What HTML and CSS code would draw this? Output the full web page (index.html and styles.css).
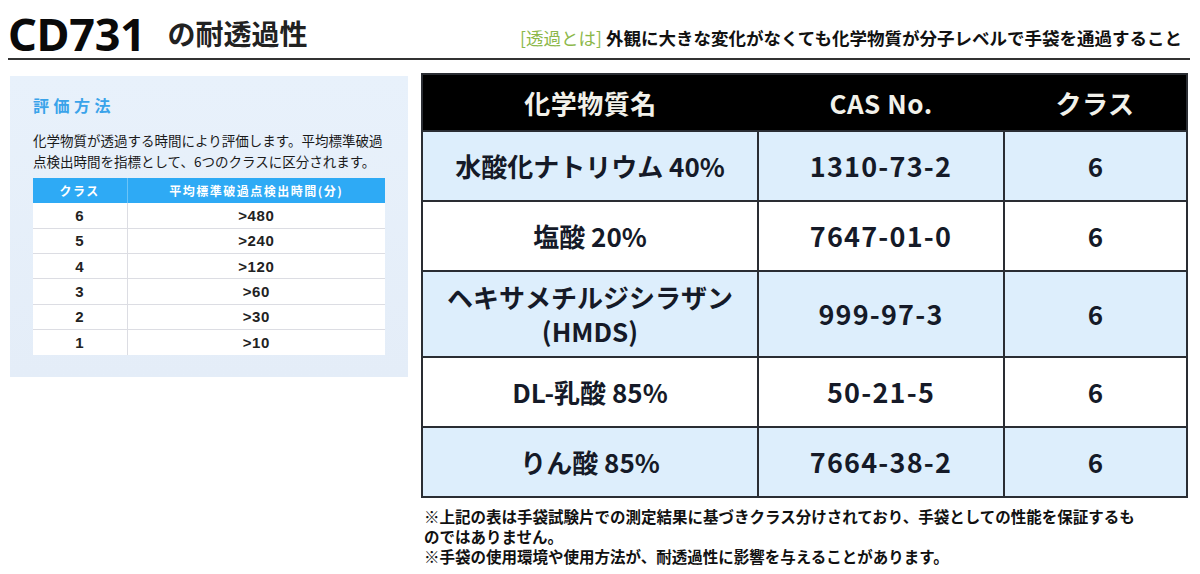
FILE: index.html
```html
<!DOCTYPE html>
<html lang="ja">
<head>
<meta charset="utf-8">
<title>CD731 の耐透過性</title>
<link rel="stylesheet" href="styles.css">
</head>
<body>
<div class="page">
  <header class="head">
    <h1 class="model">CD731</h1>
    <h2 class="subtitle">の耐透過性</h2>
    <p class="note"><span class="note-tag">[透過とは]</span> 外観に大きな変化がなくても化学物質が分子レベルで手袋を通過すること</p>
  </header>
  <main class="content">
    <section class="panel">
      <h3 class="panel-title">評価方法</h3>
      <p class="panel-text">化学物質が透過する時間により評価します。平均標準破過点検出時間を指標として、6つのクラスに区分されます。</p>
      <table class="mini">
        <thead>
          <tr><th class="mini-c1">クラス</th><th>平均標準破過点検出時間(分)</th></tr>
        </thead>
        <tbody>
          <tr><td>6</td><td>&gt;480</td></tr>
          <tr><td>5</td><td>&gt;240</td></tr>
          <tr><td>4</td><td>&gt;120</td></tr>
          <tr><td>3</td><td>&gt;60</td></tr>
          <tr><td>2</td><td>&gt;30</td></tr>
          <tr><td>1</td><td>&gt;10</td></tr>
        </tbody>
      </table>
    </section>
    <section class="right">
      <table class="main">
        <thead>
          <tr><th class="c1">化学物質名</th><th class="c2">CAS No.</th><th class="c3">クラス</th></tr>
        </thead>
        <tbody>
          <tr class="blue"><td>水酸化ナトリウム 40%</td><td class="cas">1310-73-2</td><td>6</td></tr>
          <tr><td>塩酸 20%</td><td class="cas">7647-01-0</td><td>6</td></tr>
          <tr class="blue tall"><td>ヘキサメチルジシラザン<br>(HMDS)</td><td class="cas">999-97-3</td><td>6</td></tr>
          <tr><td>DL-乳酸 85%</td><td class="cas">50-21-5</td><td>6</td></tr>
          <tr class="blue"><td>りん酸 85%</td><td class="cas">7664-38-2</td><td>6</td></tr>
        </tbody>
      </table>
      <div class="foot">
        <p>※上記の表は手袋試験片での測定結果に基づきクラス分けされており、手袋としての性能を保証するものではありません。</p>
        <p>※手袋の使用環境や使用方法が、耐透過性に影響を与えることがあります。</p>
      </div>
    </section>
  </main>
</div>
</body>
</html>
```
FILE: styles.css
```css
* { box-sizing: border-box; }
html, body { margin: 0; padding: 0; background: #fff; }
body { font-family: "Noto Sans CJK JP", "Noto Sans", sans-serif; color: #111; }
.page { width: 1200px; padding: 0 10px 0 8px; }

.head {
  display: flex;
  align-items: center;
  height: 60px;
  padding-top: 8px;
  border-bottom: 2px solid #333;
}
.model {
  margin: 0;
  font-family: "Noto Sans", sans-serif;
  font-weight: 700;
  font-size: 45px;
  line-height: 1;
  color: #0a0a0a;
  letter-spacing: -0.3px;
}
.subtitle {
  margin: 0 0 0 22px;
  font-size: 28px;
  font-weight: 700;
  line-height: 1;
  color: #222;
}
.note {
  margin: 10px 0 0 auto;
  padding-right: 8px;
  font-size: 17.5px;
  font-weight: 700;
  color: #111;
  line-height: 1;
}
.note-tag { color: #8cb84a; font-weight: 400; }

.content {
  display: flex;
  align-items: flex-start;
  gap: 13px;
  padding-top: 13px;
}

.panel {
  width: 398px;
  margin-left: 2px;
  margin-top: 3px;
  padding: 17px 23px 22px 23px;
  background: linear-gradient(180deg, #e8f1fb 0%, #e4edf8 100%);
}
.panel-title {
  margin: 0;
  font-size: 16px;
  line-height: 24px;
  letter-spacing: 4.5px;
  font-weight: 700;
  color: #3aa3ea;
}
.panel-text {
  margin: 13px 0 6px;
  font-size: 13.5px;
  line-height: 21px;
  color: #1a1a1a;
}
.mini {
  width: 352px;
  border-collapse: collapse;
  background: #fff;
}
.mini th {
  height: 25px;
  background: #2eaaf5;
  color: #fff;
  font-size: 12px;
  font-weight: 700;
  letter-spacing: 1.5px;
  padding: 0;
  border-left: 1px solid #6cc4f7;
}
.mini th.mini-c1 { width: 94px; border-left: none; }
.mini td {
  height: 25.3px;
  padding: 0;
  text-align: center;
  font-family: "Liberation Sans", Arial, sans-serif;
  font-weight: 700;
  font-size: 15px;
  letter-spacing: 0.6px;
  color: #222;
  border-top: 1px solid #dcdde3;
  border-left: 1px solid #dcdde3;
}
.mini td:first-child { border-left: none; }
.mini tbody tr:first-child td { border-top: none; }

.right { width: 767px; }
.main {
  width: 767px;
  border-collapse: collapse;
  border: 2px solid #2a2d33;
}
.main th {
  height: 57px;
  background: #000;
  color: #f2f1ea;
  font-size: 26px;
  font-weight: 700;
  padding: 0;
  letter-spacing: 0.5px;
}
.main .c1 { width: 336px; }
.main .c2 { width: 246px; }
.main td {
  height: 70px;
  padding: 0;
  text-align: center;
  font-size: 26px;
  font-weight: 700;
  color: #151a28;
  line-height: 34px;
  border: 2px solid #2a2d33;
  background: #fff;
}
.main td.cas { font-size: 27px; letter-spacing: 1.2px; }
.main tr.blue td { background: #ddeefc; }
.main tr.tall td { height: 86px; }

.foot {
  margin-top: 8px;
  padding-left: 3px;
  width: 718px;
}
.foot p {
  margin: 0;
  font-size: 15.5px;
  line-height: 20px;
  font-weight: 700;
  color: #111;
}
```
